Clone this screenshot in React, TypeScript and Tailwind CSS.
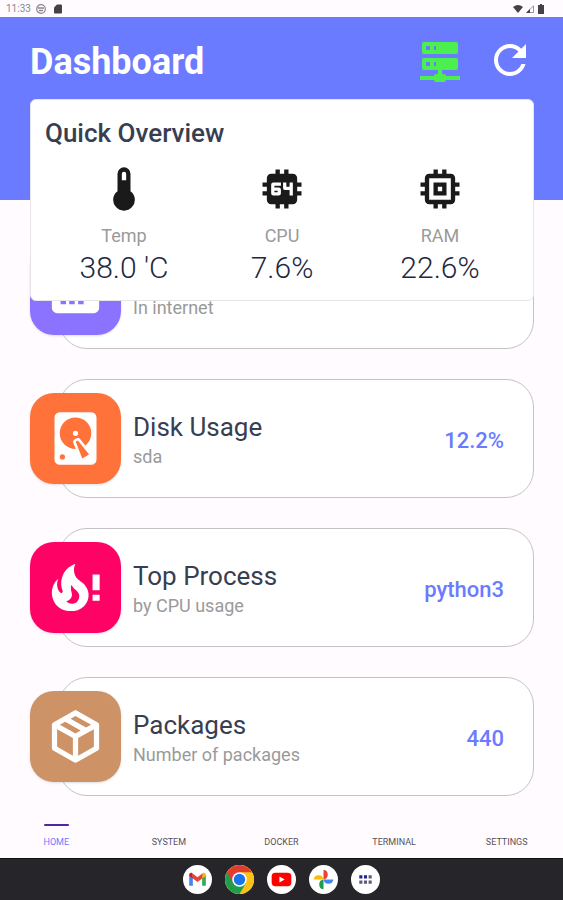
import { useState } from 'react';
import type { ReactNode } from 'react';

// Glyph outlines, all on a 24x24 grid
const glyphs = {
    server: 'M13,19H14A1,1 0 0,1 15,20H22V22H15A1,1 0 0,1 14,23H10A1,1 0 0,1 9,22H2V20H9A1,1 0 0,1 10,19H11V17H4A1,1 0 0,1 3,16V12A1,1 0 0,1 4,11H20A1,1 0 0,1 21,12V16A1,1 0 0,1 20,17H13V19M4,3H20A1,1 0 0,1 21,4V8A1,1 0 0,1 20,9H4A1,1 0 0,1 3,8V4A1,1 0 0,1 4,3M9,7H10V5H9V7M9,15H10V13H9V15M5,5V7H7V5H5M5,13V15H7V13H5Z',
    refresh: 'M17.65,6.35C16.2,4.9 14.21,4 12,4A8,8 0 0,0 4,12A8,8 0 0,0 12,20C15.73,20 18.84,17.45 19.73,14H17.65C16.83,16.33 14.61,18 12,18A6,6 0 0,1 6,12A6,6 0 0,1 12,6C13.66,6 15.14,6.69 16.22,7.78L13,11H20V4L17.65,6.35Z',
    thermometer: 'M15 13V5A3 3 0 0 0 9 5V13A5 5 0 1 0 15 13M12 4A1 1 0 0 1 13 5V8H11V5A1 1 0 0 1 12 4Z',
    cpu: 'M9,3V5H7A2,2 0 0,0 5,7V9H3V11H5V13H3V15H5V17A2,2 0 0,0 7,19H9V21H11V19H13V21H15V19H17A2,2 0 0,0 19,17V15H21V13H19V11H21V9H19V7A2,2 0 0,0 17,5H15V3H13V5H11V3M8,9H11.5V10.5H8.5V11.25H10.5A1,1 0 0,1 11.5,12.25V14A1,1 0 0,1 10.5,15H8A1,1 0 0,1 7,14V10A1,1 0 0,1 8,9M12.5,9H14V11H15.5V9H17V15H15.5V12.5H13.5A1,1 0 0,1 12.5,11.5V9M8.5,12.75V13.5H10V12.75H8.5Z',
    memory: 'M17,17H7V7H17M21,11V9H19V7C19,5.89 18.1,5 17,5H15V3H13V5H11V3H9V5H7C5.89,5 5,5.89 5,7V9H3V11H5V13H3V15H5V17A2,2 0 0,0 7,19H9V21H11V19H13V21H15V19H17A2,2 0 0,0 19,17V15H21V13H19V11M13,13H11V11H13M15,9H9V15H15V9Z',
    network: 'M5,3H19A2,2 0 0,1 21,5V19A2,2 0 0,1 19,21H5A2,2 0 0,1 3,19V5A2,2 0 0,1 5,3M6.3,15.5V17.6H8.4V15.5H6.3M9.6,15.5V17.6H11.7V15.5H9.6M13,15.5V17.6H15.1V15.5H13Z',
    disk: 'M6,2H18A2,2 0 0,1 20,4V20A2,2 0 0,1 18,22H6A2,2 0 0,1 4,20V4A2,2 0 0,1 6,2M12,4A6,6 0 0,0 6,10C6,13.31 8.69,16 12.1,16L11.22,13.77C10.95,13.29 11.11,12.68 11.59,12.4L12.45,11.9C12.93,11.63 13.54,11.79 13.82,12.27L15.74,14.69C17.12,13.59 18,11.9 18,10A6,6 0 0,0 12,4M12,9A1,1 0 0,1 13,10A1,1 0 0,1 12,11A1,1 0 0,1 11,10A1,1 0 0,1 12,9M7,18A1,1 0 0,0 6,19A1,1 0 0,0 7,20A1,1 0 0,0 8,19A1,1 0 0,0 7,18M12.09,13.27L14.58,19.58L17.17,18.08L12.95,12.77L12.09,13.27Z',
    fire: 'M15.66 11.2C15.43 10.9 15.15 10.64 14.89 10.38C14.22 9.78 13.46 9.35 12.82 8.72C11.33 7.26 11 4.85 11.95 3C11 3.23 10.17 3.75 9.46 4.32C6.87 6.4 5.85 10.07 7.07 13.22C7.11 13.32 7.15 13.42 7.15 13.55C7.15 13.77 7 13.97 6.8 14.05C6.57 14.15 6.33 14.09 6.14 13.93C6.08 13.88 6.04 13.83 6 13.76C4.87 12.33 4.69 10.28 5.45 8.64C3.78 10 2.87 12.3 3 14.47C3.06 14.97 3.12 15.47 3.29 15.97C3.43 16.57 3.7 17.17 4 17.7C5.08 19.43 6.95 20.67 8.96 20.92C11.1 21.19 13.39 20.8 15.03 19.32C16.86 17.66 17.5 15 16.56 12.72L16.43 12.46C16.22 12 15.66 11.2 15.66 11.2M12.5 17.5C12.22 17.74 11.76 18 11.4 18.1C10.28 18.5 9.16 17.94 8.5 17.28C9.69 17 10.4 16.12 10.61 15.23C10.78 14.43 10.46 13.77 10.33 13C10.21 12.26 10.23 11.63 10.5 10.94C10.69 11.32 10.89 11.7 11.13 12C11.9 13 13.11 13.44 13.37 14.8C13.41 14.94 13.43 15.08 13.43 15.23C13.46 16.05 13.1 16.95 12.5 17.5M18.500,7H21.200V13H18.500V7M18.500,14.800H21.200V17H18.500V14.800Z',
    box: 'M21,16.5C21,16.88 20.79,17.21 20.47,17.38L12.57,21.82C12.41,21.94 12.21,22 12,22C11.79,22 11.59,21.94 11.43,21.82L3.53,17.38C3.21,17.21 3,16.88 3,16.5V7.5C3,7.12 3.21,6.79 3.53,6.62L11.43,2.18C11.59,2.06 11.79,2 12,2C12.21,2 12.41,2.06 12.57,2.18L20.47,6.62C20.79,6.79 21,7.12 21,7.5V16.5M12,4.15L10.11,5.22L16,8.61L17.96,7.5L12,4.15M6.04,7.5L12,10.85L13.96,9.75L8.08,6.35L6.04,7.5M5,15.91L11,19.29V12.58L5,9.21V15.91M19,15.91V9.21L13,12.58V19.29L19,15.91Z',
};

function Glyph({ name, className }: { name: keyof typeof glyphs; className: string }) {
    return (
        <svg viewBox="0 0 24 24" fill="currentColor" fillRule="evenodd" aria-hidden="true" className={className}>
            <path d={glyphs[name]} />
        </svg>
    );
}

const stats: { label: string; value: string; icon: keyof typeof glyphs }[] = [
    { label: 'Temp', value: "38.0 'C", icon: 'thermometer' },
    { label: 'CPU', value: '7.6%', icon: 'cpu' },
    { label: 'RAM', value: '22.6%', icon: 'memory' },
];

const items: { title: string; note: string; value: string; icon: keyof typeof glyphs; color: string }[] = [
    { title: '', note: 'In internet', value: '', icon: 'network', color: 'bg-[#8b72ff]' },
    { title: 'Disk Usage', note: 'sda', value: '12.2%', icon: 'disk', color: 'bg-[#ff733b]' },
    { title: 'Top Process', note: 'by CPU usage', value: 'python3', icon: 'fire', color: 'bg-[#ff0266]' },
    { title: 'Packages', note: 'Number of packages', value: '440', icon: 'box', color: 'bg-[#cd9367]' },
];

const tabs = ['HOME', 'SYSTEM', 'DOCKER', 'TERMINAL', 'SETTINGS'];

const apps: { name: string; logo: ReactNode }[] = [
    {
        name: 'Gmail',
        logo: (
            <>
                <path d="M6 9.5V20h3.5v-8z" fill="#4285f4" />
                <path d="M18.5 12v8H22V9.5z" fill="#34a853" />
                <path d="M18.5 9.5V13L22 10.500V9.500c0-1.800-1.700-2.500-3-1.500z" fill="#fbbc04" />
                <path d="M6 9.500V10.500L9.500 13V9.500L9 8C7.700 7 6 7.700 6 9.500z" fill="#c5221f" />
                <path d="M9 8l5 3.800L19 8l-.5 5L14 16.400 9.500 13z" fill="#ea4335" />
            </>
        ),
    },
    {
        name: 'Chrome',
        logo: (
            <>
                <circle cx="14" cy="14" r="14" fill="#fbc116" />
                <path d="M14 14L1.900 7A14 14 0 0 0 14 28l6.100-10.500z" fill="#1e9e4a" />
                <path d="M14 7h12.100A14 14 0 0 0 1.900 7L8 17.500z" fill="#e33b2e" />
                <circle cx="14" cy="14" r="7" fill="#fff" />
                <circle cx="14" cy="14" r="5.500" fill="#1a73e8" />
            </>
        ),
    },
    {
        name: 'YouTube',
        logo: (
            <>
                <rect x="4.500" y="7.500" width="19" height="13" rx="3.500" fill="#f00" />
                <path d="M12 11v6l5-3z" fill="#fff" />
            </>
        ),
    },
    {
        name: 'Photos',
        logo: (
            <>
                <path d="M14 4.500a4.800 4.800 0 0 1 0 9.500z" fill="#ea4335" />
                <path d="M23.500 14a4.800 4.800 0 0 1-9.500 0z" fill="#4285f4" />
                <path d="M14 23.500a4.800 4.800 0 0 1 0-9.500z" fill="#1e9e4a" />
                <path d="M4.500 14a4.800 4.800 0 0 1 9.500 0z" fill="#fbbc04" />
            </>
        ),
    },
    {
        name: 'All apps',
        logo: (
            <>
                <path d="M8 10h3v3H8zM12.500 10h3v3h-3z" fill="#23238e" />
                <path d="M17 10h3v3h-3zM8 15h3v3H8zM12.500 15h3v3h-3zM17 15h3v3h-3z" fill="#5c5c78" />
            </>
        ),
    },
];

function StatusBar() {
    return (
        <div className="flex h-[17px] items-center justify-between pr-[18px] pl-[6px] text-[#8b878e]">
            <div className="flex items-center gap-[5px]">
                <span className="text-[10px] leading-none">11:33</span>
                <svg viewBox="0 0 10 10" className="size-[10px]" fill="none" stroke="currentColor" aria-hidden="true">
                    <circle cx="5" cy="5" r="4.300" strokeWidth="1.200" />
                    <path d="M2 4h6M3 6.500h4" strokeWidth="1.300" />
                </svg>
                <svg viewBox="0 0 10 10" className="ml-[2px] size-[10px]" aria-hidden="true">
                    <path d="M4 .5h4a1 1 0 0 1 1 1v7a1 1 0 0 1-1 1H2a1 1 0 0 1-1-1v-5z" fill="#454247" />
                </svg>
            </div>
            <div className="flex items-center gap-[3px] text-[#454247]">
                <svg viewBox="0 0 10 8" className="h-2 w-[10px]" aria-hidden="true">
                    <path d="M0 2Q5-2 10 2L5 8z" fill="currentColor" />
                </svg>
                <svg viewBox="0 0 8 8" className="size-2" aria-hidden="true">
                    <path d="M.8 7.500L7.500.8v6.700z" fill="none" stroke="#99959c" />
                    <path d="M0 8l4-4v4z" fill="currentColor" />
                </svg>
                <svg viewBox="0 0 8 10" className="h-[10px] w-2" aria-hidden="true">
                    <path d="M3 0h2v1h2v9H1V1h2z" fill="currentColor" />
                </svg>
            </div>
        </div>
    );
}

export default function App() {
    const [active, setActive] = useState('HOME');

    return (
        <div className="flex min-h-screen flex-col bg-[#fffbff] font-[Roboto,'Liberation_Sans',sans-serif]">
            <StatusBar />

            <header className="flex h-[183px] items-start justify-between bg-[#6b7bff] pt-[19px] pr-[29px] pl-[30px] text-white">
                <h1 className="text-[36px] leading-[52px] font-bold">Dashboard</h1>
                <div className="flex gap-[22px]">
                    <button type="button" aria-label="Server" className="text-[#4bf04f]">
                        <Glyph name="server" className="size-12" />
                    </button>
                    <button type="button" aria-label="Refresh">
                        <Glyph name="refresh" className="size-12" />
                    </button>
                </div>
            </header>

            <main className="flex-1 pr-[29px] pl-[30px]">
                <section className="relative z-10 mt-[-101px] rounded-md border border-[#e6e4e8] bg-white px-[14px] pt-[18px] pb-[14px]">
                    <h2 className="text-[26px] leading-[30px] font-medium text-[#383e51]">Quick Overview</h2>
                    <div className="mt-[15px] grid grid-cols-3">
                        {stats.map(stat => (
                            <div key={stat.label} className="flex flex-col items-center">
                                <Glyph name={stat.icon} className="size-[52px] text-[#1a1a1a]" />
                                <span className="mt-[11px] text-[18px] leading-5 text-[#9a9a9a]">{stat.label}</span>
                                <span className="mt-[4px] text-[30px] leading-9 font-light text-[#222841]">{stat.value}</span>
                            </div>
                        ))}
                    </div>
                </section>

                <ul className="mt-[-71px] flex flex-col gap-[30px]">
                    {items.map(item => (
                        <li key={item.note} className="flex items-center">
                            <div className={`z-[1] flex size-[91px] shrink-0 items-center justify-center rounded-3xl text-white shadow ${item.color}`}>
                                <Glyph name={item.icon} className="size-[63px]" />
                            </div>
                            <div className="ml-[-62px] flex h-[119px] flex-1 items-center justify-between rounded-[28px] border border-[#c4c2c6] bg-white pt-[3px] pr-[29px] pl-[73px]">
                                <div>
                                    <h3 className="h-8 text-[26px] leading-8 text-[#383e51]">{item.title}</h3>
                                    <p className="mt-[2px] text-[18px] leading-6 text-[#9a9a9a]">{item.note}</p>
                                </div>
                                <span className="text-[22px] font-medium text-[#6b7bff]">{item.value}</span>
                            </div>
                        </li>
                    ))}
                </ul>
            </main>

            <nav className="grid h-[34px] grid-cols-5">
                {tabs.map(tab => (
                    <button
                        key={tab}
                        type="button"
                        onClick={() => setActive(tab)}
                        className={`flex flex-col items-center text-[9px] leading-3 ${active === tab ? 'text-[#6b7bff]' : 'text-[#55525a]'}`}
                    >
                        <span className={`mb-[10px] h-[2px] w-[25px] rounded-full ${active === tab ? 'bg-[#5423a0]' : ''}`}></span>
                        {tab}
                    </button>
                ))}
            </nav>

            <footer className="flex h-[42px] items-center justify-center gap-[13px] border-t border-[#111] bg-[#262529]">
                {apps.map(app => (
                    <button key={app.name} type="button" aria-label={app.name} className="size-[29px] rounded-full bg-white">
                        <svg viewBox="0 0 28 28" className="size-[29px]" aria-hidden="true">{app.logo}</svg>
                    </button>
                ))}
            </footer>
        </div>
    );
}
